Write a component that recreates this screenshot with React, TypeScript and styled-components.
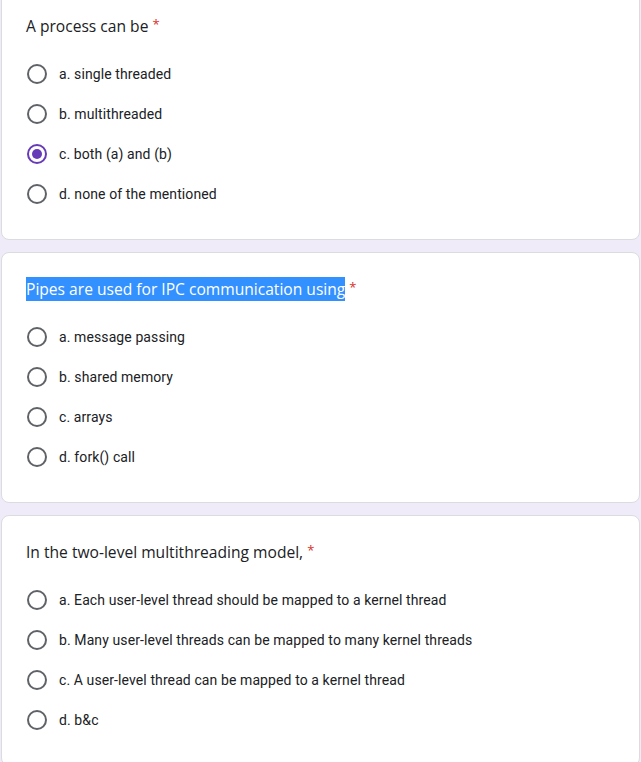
import React from 'react';
import styled, {createGlobalStyle} from "styled-components";

const GlobalStyle = createGlobalStyle`
    body {
        margin: 0;
        background-color: #f0ebf8;
        font-family: Roboto, 'Liberation Sans', sans-serif;
    }
`

type Question = {
    title: string
    options: string[]
    checked?: number
    highlighted?: boolean
}

const questions: Question[] = [
    {
        title: 'A process can be',
        options: ['a. single threaded', 'b. multithreaded', 'c. both (a) and (b)', 'd. none of the mentioned'],
        checked: 2,
    },
    {
        title: 'Pipes are used for IPC communication using',
        options: ['a. message passing', 'b. shared memory', 'c. arrays', 'd. fork() call'],
        highlighted: true,
    },
    {
        title: 'In the two-level multithreading model,',
        options: [
            'a. Each user-level thread should be mapped to a kernel thread',
            'b. Many user-level threads can be mapped to many kernel threads',
            'c. A user-level thread can be mapped to a kernel thread',
            'd. b&c',
        ],
    },
]

export default function App() {
    return (
        <>
            <GlobalStyle/>
            <Page>
                {questions.map((q, i) => (
                    <Card key={i}>
                        <Title>
                            <TitleText highlighted={q.highlighted}>{q.title}</TitleText>
                            <Required>*</Required>
                        </Title>
                        <Options>
                            {q.options.map((opt, j) => (
                                <Option key={j}>
                                    <Radio checked={q.checked === j}/>
                                    <OptionLabel>{opt}</OptionLabel>
                                </Option>
                            ))}
                        </Options>
                    </Card>
                ))}
            </Page>
        </>
    );
}

const Page = styled.div`
    display: flex;
    flex-direction: column;
    gap: 12px;
    padding: 0 1px;
    margin-top: -11px;
`

const Card = styled.div`
    background-color: #fff;
    border: 1px solid #dadce0;
    border-radius: 8px;
    padding: 24px 24px 25px;
`

const Title = styled.div`
    font-family: 'Open Sans', sans-serif;
    font-size: 15.6px;
    line-height: 24px;
    color: #202124;
    display: flex;
    align-items: flex-start;
    margin-bottom: 16px;
`

const TitleText = styled.span<{ highlighted?: boolean }>`
    background-color: ${props => props.highlighted ? '#3390ff' : 'transparent'};
    color: ${props => props.highlighted ? '#fff' : '#202124'};
`

const Required = styled.span`
    color: #d93025;
    font-size: 13px;
    line-height: 20px;
    margin-left: 4px;
`

const Options = styled.div`
    display: flex;
    flex-direction: column;
`

const Option = styled.div`
    display: flex;
    align-items: center;
    height: 40px;
`

const Radio = styled.span<{ checked?: boolean }>`
    box-sizing: border-box;
    width: 20px;
    height: 20px;
    border-radius: 50%;
    border: 2px solid ${props => props.checked ? '#673ab7' : '#5f6368'};
    display: flex;
    align-items: center;
    justify-content: center;
    margin: 0 12px 0 1px;
    flex-shrink: 0;

    &::after {
        content: '';
        width: 10px;
        height: 10px;
        border-radius: 50%;
        background-color: #673ab7;
        display: ${props => props.checked ? 'block' : 'none'};
    }
`

const OptionLabel = styled.span`
    font-size: 14px;
    color: #202124;
    letter-spacing: 0.1px;
`
